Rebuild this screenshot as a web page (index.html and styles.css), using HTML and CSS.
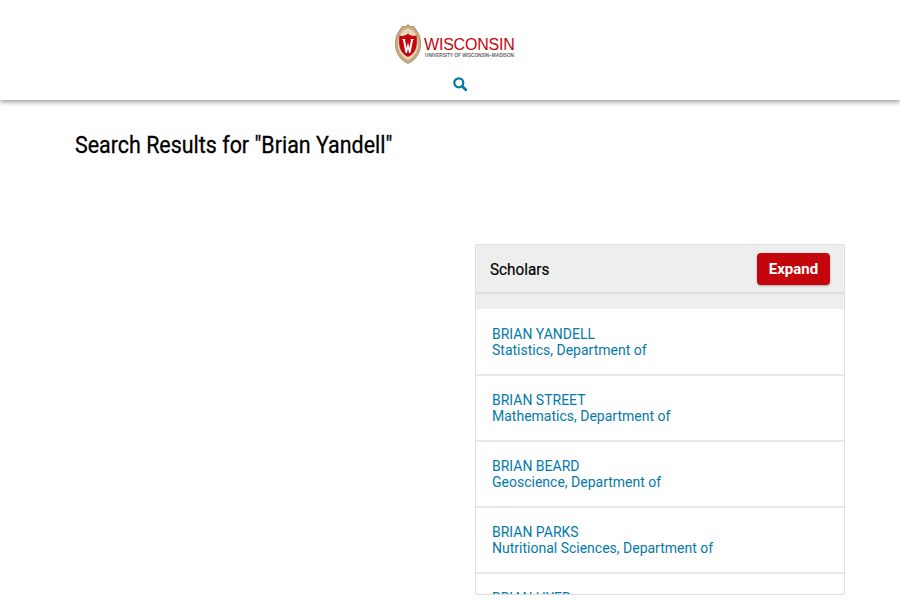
FILE: index.html
```html
<!doctype html>
<html lang="en-US">
    <head>
        <meta charset="utf-8">
        <meta name="viewport" content="width=device-width, initial-scale=1.0">
        <title>Search Results | Wisconsin</title>
        <link rel="stylesheet" href="styles.css">
    </head>
    <body>
        <header class="site-header">
            <a class="logo" href="#">
                <svg class="crest" width="26" height="40" viewBox="0 0 26 40" aria-hidden="true">
                    <path d="M13 0.5 L15.5 2.5 L19 2.5 L20.5 5 C24 9 25.7 14 25.7 20 C25.7 29 20.5 36.5 13 39.5 C5.5 36.5 0.3 29 0.3 20 C0.3 14 2 9 5.5 5 L7 2.5 L10.5 2.5 Z" fill="#c8aa80" stroke="#8f7656" stroke-width="0.6"/>
                    <path d="M13 4.5 L18 6.5 C21.5 10 23 15 23 20 C23 28 18.5 33.5 13 36 C7.5 33.5 3 28 3 20 C3 15 4.5 10 8 6.5 Z" fill="#e4d6bd"/>
                    <path d="M4.5 11.5 C8 12.5 11 11.5 13 9.5 C15 11.5 18 12.5 21.5 11.5 C22.3 17 22 23 20 26.5 C18.3 29.5 16 31.5 13 33 C10 31.5 7.7 29.5 6 26.5 C4 23 3.7 17 4.5 11.5 Z" fill="#c5050c"/>
                    <path d="M7 15 H10.6 L10 16 L11.6 24 L13 18.5 L14.4 24 L16 16 L15.4 15 H19 L18 16 L15.5 29 H14 L13 24.5 L12 29 H10.5 L8 16 Z" fill="#fff"/>
                </svg>
                <span class="wordmark">
                    <span class="wordmark-name">WISCONSIN</span>
                    <span class="wordmark-sub">UNIVERSITY OF WISCONSIN–MADISON</span>
                </span>
            </a>
            <a class="search-link" href="#" aria-label="Search">
                <svg width="14" height="14" viewBox="0 0 14 14" aria-hidden="true">
                    <circle cx="5.8" cy="5.8" r="4.5" fill="none" stroke="#0479a8" stroke-width="2.2"/>
                    <path d="M9.2 9.2 L12.8 12.8" stroke="#0479a8" stroke-width="2.8" stroke-linecap="round"/>
                </svg>
            </a>
        </header>
        <main class="content">
            <h1>Search Results for "Brian Yandell"</h1>
            <section class="panel">
                <div class="panel-head">
                    <h2>Scholars</h2>
                    <button class="expand" type="button">Expand</button>
                </div>
                <div class="panel-gap"></div>
                <ul class="scholars">
                    <li><a href="#">BRIAN YANDELL<br>Statistics, Department of</a></li>
                    <li><a href="#">BRIAN STREET<br>Mathematics, Department of</a></li>
                    <li><a href="#">BRIAN BEARD<br>Geoscience, Department of</a></li>
                    <li><a href="#">BRIAN PARKS<br>Nutritional Sciences, Department of</a></li>
                    <li><a href="#">BRIAN HYER<br>Music, School of</a></li>
                </ul>
            </section>
        </main>
    </body>
</html>
```

FILE: styles.css
```css
* {
    padding: 0;
    margin: 0;
    box-sizing: border-box;
}

html,
body {
    height: 600px;
    overflow: hidden;
}

body {
    font-family: Roboto, "Liberation Sans", sans-serif;
    background: #fff;
    color: #000;
}

a {
    color: #0479a8;
    text-decoration: none;
}

.site-header {
    height: 100px;
    padding: 24px 0 0 20px;
    display: flex;
    flex-direction: column;
    align-items: center;
    box-shadow: 0 2px 5px rgba(0, 0, 0, 0.4);
}

.logo {
    display: flex;
    align-items: flex-start;
    gap: 3px;
    height: 40px;
    margin-right: 10px;
}

.wordmark {
    display: flex;
    flex-direction: column;
    width: 91px;
    padding-top: 13px;
}

.wordmark-name {
    color: #c5050c;
    font-family: "Liberation Sans", sans-serif;
    font-size: 16px;
    line-height: 15px;
    letter-spacing: -0.2px;
}

.wordmark-sub {
    color: #666;
    font-family: "Liberation Sans", sans-serif;
    font-size: 4.7px;
    font-weight: 700;
    line-height: 6px;
    margin: 1px 0 0 1px;
    white-space: nowrap;
}

.search-link {
    display: block;
    height: 14px;
    margin-top: 12px;
}

.content {
    padding: 31px 55px 0 75px;
    display: flex;
    flex-direction: column;
}

h1 {
    font-size: 24px;
    line-height: 28px;
    font-weight: 400;
    white-space: nowrap;
    -webkit-text-stroke: 0.3px #000;
    transform: scaleX(0.893);
    transform-origin: left center;
    margin-bottom: 85px;
}

.panel {
    width: 370px;
    height: 351px;
    margin-left: 400px;
    border: 1px solid #ddd;
    border-radius: 2px;
    overflow: hidden;
}

.panel-head {
    height: 49px;
    padding: 0 14px;
    display: flex;
    align-items: center;
    justify-content: space-between;
    background: #eee;
    border-bottom: 2px solid #ddd;
}

h2 {
    font-size: 17px;
    font-weight: 400;
    -webkit-text-stroke: 0.2px #000;
    transform: scaleX(0.9);
    transform-origin: left center;
}

.expand {
    width: 73px;
    height: 32px;
    background: #c5050c;
    color: #fff;
    font-family: inherit;
    font-size: 15px;
    font-weight: 700;
    border: none;
    border-radius: 4px;
    box-shadow: 0 1px 2px rgba(0, 0, 0, 0.3);
}

.panel-gap {
    height: 15px;
    background: #eee;
}

.scholars {
    list-style: none;
    padding-top: 1px;
}

.scholars li {
    height: 66px;
    padding: 16px;
    border-bottom: 2px solid #e8e8e8;
    font-size: 14px;
    line-height: 16px;
}
```
